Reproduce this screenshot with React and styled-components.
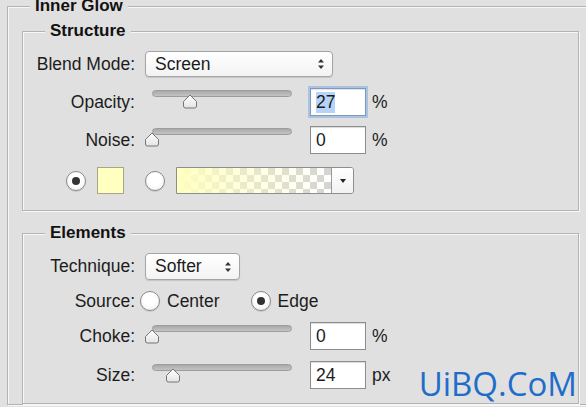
import React from "react";
import styled, { createGlobalStyle } from "styled-components";

const GlobalStyle = createGlobalStyle`
  html, body {
    margin: 0;
    padding: 0;
    background: #e1e1e1;
    overflow: hidden;
  }
  body {
    font-family: "Liberation Sans", Arial, sans-serif;
    color: #1c1c1c;
  }
`;

const Page = styled.div`
  width: 620px;
  height: 420px;
  margin-top: -4px;
  padding-left: 7px;
  box-sizing: border-box;
`;

const Group = styled.fieldset`
  position: relative;
  margin: ${(p) => p.$mt || 0}px 0 0 0;
  padding: ${(p) => (p.$outer ? "5px 40px 0 14px" : "10px 0 0 0")};
  padding-bottom: ${(p) => p.$pb || 0}px;
  border: 1px solid #b3b3b3;
  box-shadow: inset 1px 1px 0 #f7f7f7, 1px 1px 0 #f7f7f7;
  min-width: 0;
  background: #e0e0e0;
`;

const Legend = styled.legend`
  margin-left: ${(p) => p.$offset}px;
  padding: 0 5px;
  font-weight: bold;
  font-size: 17px;
  line-height: 20px;
  color: #111;
  background: #e0e0e0;
`;

const Stack = styled.div`
  display: flex;
  flex-direction: column;
  gap: ${(p) => p.$gap || 10}px;
`;

const Row = styled.div`
  display: flex;
  align-items: center;
  gap: 10px;
  height: ${(p) => p.$h}px;
  margin-top: ${(p) => p.$mt || 0}px;
  padding-left: ${(p) => p.$pl || 0}px;
`;

const Label = styled.div`
  flex: none;
  width: 112px;
  text-align: right;
  white-space: nowrap;
  font-size: 17.5px;
`;

const Select = styled.div`
  box-sizing: border-box;
  width: ${(p) => p.$w}px;
  height: ${(p) => p.$h}px;
  display: flex;
  align-items: center;
  justify-content: space-between;
  padding: 0 7px 0 9px;
  border: 1px solid #a4a4a4;
  border-radius: 4px;
  background: linear-gradient(#ffffff, #f3f3f3);
  box-shadow: 0 1px 1px rgba(0, 0, 0, 0.12);
  font-size: 17.5px;
`;

const SliderWrap = styled.div`
  position: relative;
  flex: none;
  width: 155px;
  height: 22px;
  align-self: flex-start;
  margin-top: ${(p) => p.$mt || 2}px;
`;

const Track = styled.div`
  position: absolute;
  top: 0;
  left: 7px;
  right: 8px;
  height: 5px;
  border: 1px solid #9c9c9c;
  border-radius: 4px;
  background: linear-gradient(#a9a9a9, #c4c4c4);
`;

const Thumb = styled.svg`
  position: absolute;
  top: 4px;
  width: 16px;
  height: 15px;
  margin-left: -8px;
`;

const Field = styled.div`
  box-sizing: border-box;
  flex: none;
  width: 56px;
  height: 28px;
  display: flex;
  align-items: center;
  padding-left: 5px;
  background: #fff;
  border: 1px solid ${(p) => (p.$focus ? "#8398b4" : "#8d8d8d")};
  box-shadow: ${(p) =>
    p.$focus
      ? "0 0 0 2px #a8c3e4, inset 0 1px 1px rgba(0,0,0,0.12)"
      : "inset 0 1px 1px rgba(0,0,0,0.15)"};
  font-size: 17.5px;
`;

const Selected = styled.span`
  background: #b6d4f7;
`;

const Unit = styled.span`
  margin-left: -4px;
  font-size: 17.5px;
`;

const Radio = styled.div`
  box-sizing: border-box;
  flex: none;
  width: 20px;
  height: 20px;
  border-radius: 50%;
  border: 1px solid #8a8a8a;
  background: radial-gradient(circle at 50% 40%, #ffffff 40%, #ececec 100%);
  box-shadow: 0 1px 1px rgba(0, 0, 0, 0.12);
  display: flex;
  align-items: center;
  justify-content: center;
  &::after {
    content: "";
    display: ${(p) => (p.$on ? "block" : "none")};
    width: 8px;
    height: 8px;
    border-radius: 50%;
    background: #333;
  }
`;

const Swatch = styled.div`
  box-sizing: border-box;
  flex: none;
  width: 27px;
  height: 27px;
  margin-left: 1px;
  background: #ffffc0;
  border: 1px solid #aaa58a;
`;

const Gradient = styled.div`
  box-sizing: border-box;
  flex: none;
  width: 178px;
  height: 27px;
  margin-left: 1px;
  display: flex;
  border: 1px solid #8e8e8e;
  border-radius: 0 3px 3px 0;
  overflow: hidden;
`;

const Ramp = styled.div`
  flex: 1;
  background: linear-gradient(to right, #ffffc0 0%, rgba(255, 255, 192, 0.6) 35%, rgba(255, 255, 192, 0) 100%),
    repeating-conic-gradient(#d4d4d4 0% 25%, #ffffff 0% 50%) 0 0 / 14px 14px;
`;

const Drop = styled.div`
  width: 21px;
  border-left: 1px solid #9a9a9a;
  background: linear-gradient(#ffffff, #f2f2f2);
  display: flex;
  align-items: center;
  justify-content: center;
  &::after {
    content: "";
    border-left: 3.5px solid transparent;
    border-right: 3.5px solid transparent;
    border-top: 4px solid #222;
  }
`;

const RadioGroup = styled.div`
  display: flex;
  align-items: center;
  margin-left: -5px;
`;

const RadioText = styled.span`
  margin: 0 31px 0 7px;
  font-size: 17.5px;
`;

const Watermark = styled.div`
  position: absolute;
  right: 1px;
  top: 124px;
  font-family: "Open Sans", sans-serif;
  font-size: 33px;
  line-height: 33px;
  color: #1f6dcb;
`;

function Arrows() {
  return (
    <svg width="8" height="12" viewBox="0 0 8 12">
      <path d="M4 1 L7 4.5 L1 4.5 Z" fill="#333" />
      <path d="M4 11 L7 7.5 L1 7.5 Z" fill="#333" />
    </svg>
  );
}

function Slider({ pct, mt }) {
  return (
    <SliderWrap $mt={mt}>
      <Track />
      <Thumb viewBox="0 0 16 15" style={{ left: `${7 + (pct / 100) * 140}px` }}>
        <defs>
          <linearGradient id="tg" x1="0" y1="0" x2="0" y2="1">
            <stop offset="0" stopColor="#ffffff" />
            <stop offset="1" stopColor="#e4e4e4" />
          </linearGradient>
        </defs>
        <path
          d="M8 1 L14.5 7.5 L14.5 12 Q14.5 14 12.5 14 L3.5 14 Q1.5 14 1.5 12 L1.5 7.5 Z"
          fill="url(#tg)"
          stroke="#757575"
          strokeWidth="1"
          strokeLinejoin="round"
        />
      </Thumb>
    </SliderWrap>
  );
}

export default function App() {
  return (
    <>
      <GlobalStyle />
      <Page>
        <Group $outer>
          <Legend $offset={8}>Inner Glow</Legend>

          <Group $pb={16}>
            <Legend $offset={22}>Structure</Legend>
            <Stack>
              <Row $h={26}>
                <Label>Blend Mode:</Label>
                <Select $w={188} $h={26}>
                  Screen
                  <Arrows />
                </Select>
              </Row>
              <Row $h={28} $mt={1}>
                <Label>Opacity:</Label>
                <Slider pct={27} />
                <Field $focus>
                  <Selected>27</Selected>
                </Field>
                <Unit>%</Unit>
              </Row>
              <Row $h={28}>
                <Label>Noise:</Label>
                <Slider pct={0} />
                <Field>0</Field>
                <Unit>%</Unit>
              </Row>
              <Row $h={27} $mt={3} $pl={43}>
                <Radio $on />
                <Swatch />
                <Radio style={{ marginLeft: 11 }} />
                <Gradient>
                  <Ramp />
                  <Drop />
                </Gradient>
              </Row>
            </Stack>
          </Group>

          <Group $mt={12} $pb={14}>
            <Legend $offset={22}>Elements</Legend>
            <Stack $gap={11}>
              <Row $h={27}>
                <Label>Technique:</Label>
                <Select $w={95} $h={27}>
                  Softer
                  <Arrows />
                </Select>
              </Row>
              <Row $h={20}>
                <Label>Source:</Label>
                <RadioGroup>
                  <Radio />
                  <RadioText>Center</RadioText>
                  <Radio $on />
                  <RadioText>Edge</RadioText>
                </RadioGroup>
              </Row>
              <Row $h={28}>
                <Label>Choke:</Label>
                <Slider pct={0} mt={3} />
                <Field>0</Field>
                <Unit>%</Unit>
              </Row>
              <Row $h={28}>
                <Label>Size:</Label>
                <Slider pct={15} mt={3} />
                <Field>24</Field>
                <Unit>px</Unit>
              </Row>
            </Stack>
            <Watermark>UiBQ.CoM</Watermark>
          </Group>
        </Group>
      </Page>
    </>
  );
}
